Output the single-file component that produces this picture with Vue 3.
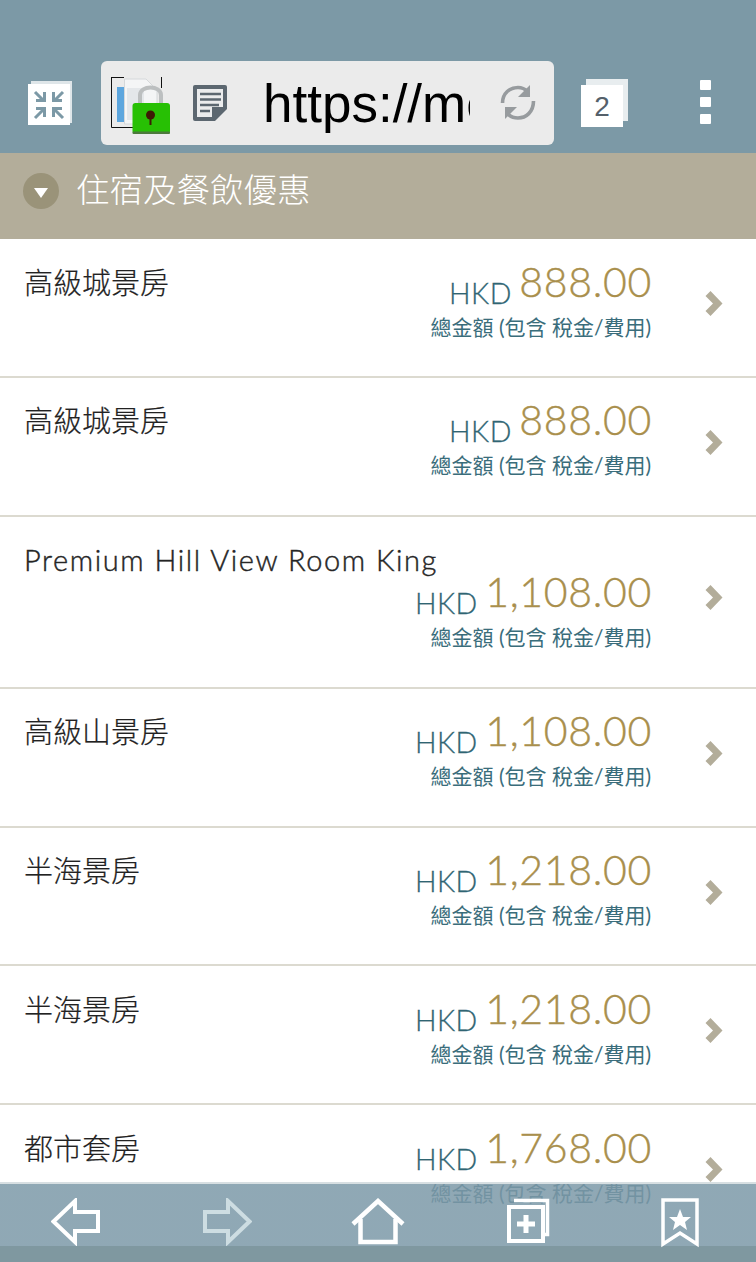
<template>
  <div class="screen">
    <header class="toolbar">
      <button class="tool-btn exit-btn" aria-label="exit fullscreen">
        <svg width="46" height="48" viewBox="0 0 46 48">
          <path d="M4 2H45V44H42V5H4Z" fill="#dfe6e9" />
          <rect x="1" y="5" width="42" height="41" fill="#fff" />
          <g fill="none" stroke="#7c99a6" stroke-width="3">
            <path d="M8 13L17 22M9 21.5H17.5V13" />
            <path d="M36 13L27 22M35 21.5H26.5V13" />
            <path d="M8 39L17 30M9 29.5H17.5V38" />
            <path d="M36 39L27 30M35 29.5H26.5V38" />
          </g>
        </svg>
      </button>

      <div class="url-box">
        <svg class="site-icon" width="60" height="60" viewBox="0 0 60 60">
          <path d="M0.500 3V53.500H22M0.500 3.500H13M50.500 3V14" fill="none" stroke="#111" />
          <rect x="6" y="13" width="7" height="35" fill="#5da6de" />
          <path d="M13.500 5H35L46 16V50H13.500Z" fill="#f4f5f6" stroke="#d5d8da" />
          <rect x="16" y="14" width="17" height="32" fill="#e4e7ea" />
          <path d="M29 32V21C29 11 50 11 50 21V32" fill="none" stroke="#bcbfc0" stroke-width="4" />
          <rect x="21.500" y="29" width="37.500" height="31" rx="3" fill="#27c004" />
          <rect x="21.500" y="57.500" width="37.500" height="2.500" rx="1" fill="#4c7a3c" />
          <circle cx="39.500" cy="41" r="4.500" fill="#3e1a05" />
          <rect x="38.500" y="41" width="2" height="10" fill="#3e1a05" />
        </svg>
        <svg class="page-icon" width="36" height="38" viewBox="0 0 36 38">
          <path d="M3 1H33Q35 1 35 3V25L23 37H3Q1 37 1 35V3Q1 1 3 1Z" fill="#5c6770" />
          <path d="M5 5H31V23H20V33H5Z" fill="#ebeced" />
          <path d="M8 10H29M8 15.500H29M8 21H27M8 27H18" stroke="#5c6770" stroke-width="2.600" />
        </svg>
        <span class="url-text">https://mo</span>
        <svg class="reload-icon" width="36" height="38" viewBox="0 0 36 38">
          <g fill="none" stroke="#979b9e" stroke-width="3.600">
            <path d="M2.500 19C2.500 9 10 3.500 18 3.500C22 3.500 25 5 27.500 7.500" />
            <path d="M33.500 17C33.500 28 26 34 18 34C14 34 11 33 8.500 30.500" />
          </g>
          <path d="M30 1V13H18Z" fill="#979b9e" />
          <path d="M5 23H17L5 35Z" fill="#979b9e" />
        </svg>
      </div>

      <button class="tool-btn tabs-btn" aria-label="tabs">
        <span class="tab-back"></span>
        <span class="tab-front">2</span>
      </button>

      <div class="menu-dots">
        <span></span>
        <span></span>
        <span></span>
      </div>
    </header>

    <div class="section-head">
      <span class="head-dot"><i></i></span>
      <h1>住宿及餐飲優惠</h1>
    </div>

    <ul class="room-list">
      <li v-for="(room, i) in rooms" :key="i" class="room">
        <div class="room-body">
          <div class="room-name" :class="{ latin: room.latin }">{{ room.name }}</div>
          <div class="room-price">
            <div class="price-line">
              <span class="currency">HKD</span>
              <span class="amount">{{ room.price }}</span>
            </div>
            <div class="price-note">總金額 (包含 稅金/費用)</div>
          </div>
        </div>
        <svg class="chevron" width="18" height="26" viewBox="0 0 17 26">
          <path d="M0 5L5 0L17 12.500L5 25L0 20L7.500 12.500Z" fill="#b3ad9a" />
        </svg>
      </li>
    </ul>

    <nav class="bottom-bar">
      <svg width="50" height="48" viewBox="0 0 50 48">
        <path d="M2.500 23.500L24 3V14H47V33H24V44Z" fill="none" stroke="#fff" stroke-width="4" />
      </svg>
      <svg width="50" height="48" viewBox="0 0 50 48">
        <path d="M47.500 23.500L26 3V14H3V33H26V44Z" fill="none" stroke="#cddde2" stroke-width="4" />
      </svg>
      <svg width="54" height="48" viewBox="0 0 54 48">
        <path d="M2 26L27 3L52 26" fill="none" stroke="#fff" stroke-width="4.500" />
        <path d="M9.500 21V44H44.500V21" fill="none" stroke="#fff" stroke-width="4.500" />
      </svg>
      <svg width="43" height="46" viewBox="0 0 43 46">
        <path d="M7 2.500H40.500V36.500H37" fill="none" stroke="#fff" stroke-width="3.500" />
        <rect x="2" y="9" width="34" height="34" fill="none" stroke="#fff" stroke-width="4" />
        <path d="M19 17V35M10 26H28" stroke="#fff" stroke-width="5" />
      </svg>
      <svg width="38" height="50" viewBox="0 0 38 50">
        <path d="M2 2H36V46L19 35L2 46Z" fill="none" stroke="#fff" stroke-width="3.500" />
        <path d="M19 11L22 19H30L24 24L26 32L19 27L12 32L14 24L8 19H16Z" fill="#fff" />
      </svg>
    </nav>
  </div>
</template>

<script setup>
const rooms = [
  { name: '高級城景房', price: '888.00' },
  { name: '高級城景房', price: '888.00' },
  { name: 'Premium Hill View Room King', price: '1,108.00', latin: true },
  { name: '高級山景房', price: '1,108.00' },
  { name: '半海景房', price: '1,218.00' },
  { name: '半海景房', price: '1,218.00' },
  { name: '都市套房', price: '1,768.00' }
]
</script>

<style>
html, body {
  margin: 0;
  background: #fff;
}
</style>

<style scoped>
.screen {
  position: relative;
  width: 756px;
  height: 1262px;
  overflow: hidden;
  background: #fff;
  font-family: Lato, "Noto Sans CJK TC", sans-serif;
}

.toolbar {
  box-sizing: border-box;
  height: 153px;
  padding: 61px 0 0 27px;
  display: flex;
  align-items: flex-start;
  background: #7c99a6;
}

.tool-btn {
  padding: 0;
  border: 0;
  background: none;
}

.exit-btn {
  width: 46px;
  height: 48px;
  margin: 18px 28px 0 0;
}

.url-box {
  position: relative;
  box-sizing: border-box;
  width: 453px;
  height: 84px;
  display: flex;
  align-items: center;
  padding-left: 10px;
  border-radius: 6px;
  background: #ebebeb;
}

.site-icon {
  flex: none;
  margin-top: 2px;
}

.page-icon {
  flex: none;
  margin-left: 21px;
}

.url-text {
  width: 207px;
  margin-left: 35px;
  overflow: hidden;
  white-space: nowrap;
  font-family: "Liberation Sans", sans-serif;
  font-size: 53px;
  color: #000;
}

.reload-icon {
  flex: none;
  margin-left: 30px;
}

.tabs-btn {
  position: relative;
  width: 47px;
  height: 48px;
  margin: 18px 0 0 27px;
}

.tab-back {
  position: absolute;
  top: 0;
  right: 0;
  width: 42px;
  height: 42px;
  background: #e8edef;
}

.tab-front {
  position: absolute;
  left: 0;
  bottom: 0;
  width: 42px;
  height: 42px;
  background: #fff;
  font: 28px/44px "Liberation Sans", sans-serif;
  color: #55606a;
  text-align: center;
}

.menu-dots {
  display: flex;
  flex-direction: column;
  gap: 7px;
  margin: 19px 0 0 72px;
}

.menu-dots span {
  width: 11px;
  height: 10px;
  border-radius: 1px;
  background: #fff;
}

.section-head {
  box-sizing: border-box;
  height: 86px;
  padding: 0 23px 14px;
  display: flex;
  align-items: center;
  background: #b3ad9a;
}

.head-dot {
  width: 36px;
  height: 36px;
  margin-top: 4px;
  display: flex;
  align-items: center;
  justify-content: center;
  border-radius: 50%;
  background: #9a9379;
}

.head-dot i {
  width: 0;
  height: 0;
  border-top: 10px solid #fff;
  border-left: 7px solid transparent;
  border-right: 7px solid transparent;
  margin-top: 3px;
}

.section-head h1 {
  margin: 0 0 0 17px;
  font-size: 33.500px;
  font-weight: 300;
  line-height: 44px;
  color: #fff;
}

.room-list {
  margin: 0;
  padding: 0;
  list-style: none;
}

.room {
  display: flex;
  align-items: center;
  padding: 26.500px 33px 33.400px 24px;
  border-bottom: 2px solid #dcdad0;
}

.room:last-child {
  border-bottom: 0;
}

.room-body {
  flex: 1;
  display: flex;
  flex-wrap: wrap;
  justify-content: space-between;
}

.room-name {
  font-size: 29px;
  line-height: 34px;
  font-weight: 300;
  color: #222;
  -webkit-text-stroke: 0.200px #222;
}

.room-name.latin {
  height: 33px;
  line-height: 33px;
  letter-spacing: 1.570px;
  -webkit-text-stroke: 0.450px #2c2c2c;
}

.room-price {
  margin-left: auto;
  text-align: right;
}

.price-line {
  display: flex;
  justify-content: flex-end;
  align-items: center;
  gap: 7.500px;
  height: 34px;
}

.currency {
  margin-top: 20px;
  font-size: 28.500px;
  line-height: 34px;
  font-weight: 300;
  letter-spacing: 0.500px;
  color: #2f6573;
  -webkit-text-stroke: 0.300px #2f6573;
}

.amount {
  margin: -2px -1px 0 0;
  font-size: 41px;
  line-height: 34px;
  font-weight: 300;
  letter-spacing: 0.700px;
  color: #a98f4c;
  -webkit-text-stroke: 0.400px #a98f4c;
}

.price-note {
  margin-top: 11px;
  font-size: 21px;
  line-height: 32px;
  color: #3a6d7b;
}

.chevron {
  flex: none;
  margin: 0 0 0 54px;
}

.bottom-bar {
  position: absolute;
  left: 0;
  right: 0;
  bottom: 0;
  box-sizing: border-box;
  height: 80px;
  padding: 14px 0 0;
  display: grid;
  grid-template-columns: repeat(5, 151px);
  justify-items: center;
  align-items: start;
  border-top: 2px solid #d7dfe2;
  background: linear-gradient(rgba(124, 153, 168, 0.85) 0, rgba(124, 153, 168, 0.85) 62px, #7f98a0 62px);
}
</style>
